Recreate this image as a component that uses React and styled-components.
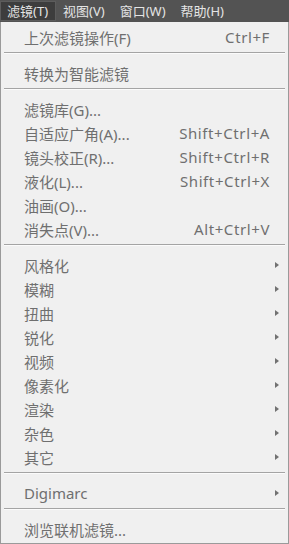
import React from "react";
import styled, { createGlobalStyle } from "styled-components";

const Global = createGlobalStyle`
  html, body { margin: 0; padding: 0; background: #f0f0f0; }
  body { font-family: "Noto Sans", "Noto Sans CJK SC", sans-serif; }
`;

const menus = [
  { label: "滤镜(T)", active: true },
  { label: "视图(V)" },
  { label: "窗口(W)" },
  { label: "帮助(H)" },
];

const sections = [
  [{ label: "上次滤镜操作(F)", key: "Ctrl+F" }],
  [{ label: "转换为智能滤镜" }],
  [
    { label: "滤镜库(G)..." },
    { label: "自适应广角(A)...", key: "Shift+Ctrl+A" },
    { label: "镜头校正(R)...", key: "Shift+Ctrl+R" },
    { label: "液化(L)...", key: "Shift+Ctrl+X" },
    { label: "油画(O)..." },
    { label: "消失点(V)...", key: "Alt+Ctrl+V" },
  ],
  [
    { label: "风格化", sub: true },
    { label: "模糊", sub: true },
    { label: "扭曲", sub: true },
    { label: "锐化", sub: true },
    { label: "视频", sub: true },
    { label: "像素化", sub: true },
    { label: "渲染", sub: true },
    { label: "杂色", sub: true },
    { label: "其它", sub: true },
  ],
  [{ label: "Digimarc", sub: true }],
  [{ label: "浏览联机滤镜..." }],
];

export default function App() {
  return (
    <>
      <Global />
      <Wrap>
        <MenuBar>
          {menus.map((m) => (
            <BarItem key={m.label} $active={m.active}>{m.label}</BarItem>
          ))}
        </MenuBar>
        <Panel>
          {sections.map((sec, i) => (
            <React.Fragment key={i}>
              {i > 0 && <Separator />}
              {sec.map((it) => (
                <Item key={it.label}>
                  <Label>{it.label}</Label>
                  {it.key && <Shortcut>{it.key}</Shortcut>}
                  {it.sub && <Arrow />}
                </Item>
              ))}
            </React.Fragment>
          ))}
        </Panel>
      </Wrap>
    </>
  );
}

const Wrap = styled.div`
  width: 289px;
  height: 544px;
  display: flex;
  flex-direction: column;
  overflow: hidden;
`;

const MenuBar = styled.div`
  height: 22px;
  background: #535353;
  display: flex;
  align-items: flex-start;
  padding-top: 1px;
  box-sizing: border-box;
`;

const BarItem = styled.div`
  height: 20px;
  line-height: 19px;
  padding: 0 7px 0 6px;
  font-size: 13px;
  color: #e4e4e4;
  box-sizing: border-box;
  border: 1px solid ${(p) => (p.$active ? "#5c5c5c" : "transparent")};
  background: ${(p) => (p.$active ? "#3d3d3d" : "transparent")};
`;

const Panel = styled.div`
  flex: 1;
  background: #f0f0f0;
  border: 1px solid #9a9a9a;
  border-top: none;
  padding: 3px 0 2px;
  display: flex;
  flex-direction: column;
`;

const Item = styled.div`
  height: 24px;
  display: flex;
  align-items: center;
  padding: 0 9px 0 23px;
  font-size: 15px;
  color: #6f6f6f;
`;

const Label = styled.span`
  flex: 1;
  white-space: nowrap;
`;

const Shortcut = styled.span`
  margin-right: 9px;
  white-space: nowrap;
  letter-spacing: 0.6px;
`;

const Arrow = styled.span`
  width: 0;
  height: 0;
  border-top: 3.5px solid transparent;
  border-bottom: 3.5px solid transparent;
  border-left: 4px solid #727272;
`;

const Separator = styled.div`
  height: 1px;
  margin: 3px 3px 8px;
  background: #a4a4a4;
  box-shadow: 0 1px 0 #fbfbfb;
`;
